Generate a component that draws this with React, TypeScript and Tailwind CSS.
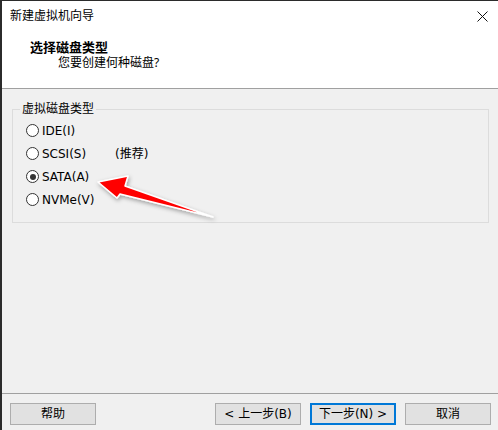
import React from "react";

const FONT = { fontFamily: '"Noto Sans", "Noto Sans CJK SC", sans-serif' };
const WIDE = { fontFamily: '"DejaVu Sans", "Noto Sans CJK SC", sans-serif' };

type Opt = { label: string; note?: string; checked?: boolean };

const OPTIONS: Opt[] = [
  { label: "IDE(I)" },
  { label: "SCSI(S)", note: "(推荐)" },
  { label: "SATA(A)", checked: true },
  { label: "NVMe(V)" },
];

function Radio({ opt }: { opt: Opt }) {
  return (
    <div className="flex h-[23px] items-center">
      <div className="flex w-[89px] items-center gap-[3px]">
        <span className="flex h-[13px] w-[13px] items-center justify-center rounded-full border border-[#333] bg-white">
          {opt.checked && <span className="h-[6px] w-[6px] rounded-full bg-[#333]" />}
        </span>
        <span className="text-[12px] leading-[16px] text-black" style={WIDE}>
          {opt.label}
        </span>
      </div>
      {opt.note && (
        <span className="text-[12px] leading-[16px] text-black" style={WIDE}>
          {opt.note}
        </span>
      )}
    </div>
  );
}

function Btn({ children, primary }: { children: React.ReactNode; primary?: boolean }) {
  return (
    <button
      className={
        "flex h-[22px] w-[86px] items-center justify-center bg-[#e1e1e1] text-[12px] leading-[16px] text-black " +
        (primary ? "border-2 border-[#0078d7]" : "border border-[#adadad]")
      }
      style={WIDE}
    >
      {children}
    </button>
  );
}

export default function App() {
  return (
    <div
      className="relative flex h-[430px] w-[498px] flex-col overflow-hidden border-t border-l-2 border-[#2b2b2b] bg-[#f0f0f0]"
      style={FONT}
    >
      {/* header */}
      <div className="h-[88px] shrink-0 border-b border-[#a0a0a0] bg-white">
        <div className="flex h-[30px] items-center justify-between pl-[8px] pr-[10px]">
          <span className="text-[12px] leading-[16px] text-black">新建虚拟机向导</span>
          <svg width="11" height="11" viewBox="0 0 11 11">
            <path d="M0.5 0.5 L10.5 10.5 M10.5 0.5 L0.5 10.5" stroke="#111" strokeWidth="1" />
          </svg>
        </div>
        <div className="mt-[9px] h-[15px] pl-[28px] text-[13px] font-bold leading-[15px] text-black">选择磁盘类型</div>
        <div className="pl-[56px] text-[12px] leading-[16px] text-black">您要创建何种磁盘?</div>
      </div>

      {/* body */}
      <div className="h-[304px] shrink-0">
        <fieldset className="mt-[12px] ml-[10px] mr-[9px] h-[122px] border border-[#dcdcdc] p-0 pl-[13px]">
          <legend className="ml-[-6px] px-[2px] text-[12px] leading-[16px] text-black">虚拟磁盘类型</legend>
          <div className="pt-[2px]">
            {OPTIONS.map((o) => (
              <Radio key={o.label} opt={o} />
            ))}
          </div>
        </fieldset>
      </div>

      {/* footer */}
      <div className="flex h-[37px] shrink-0 items-start border-t border-[#a0a0a0] pt-[9px] pl-[8px]">
        <Btn>帮助</Btn>
        <div className="ml-[119px] flex gap-[9px]">
          <Btn>&lt; 上一步(B)</Btn>
          <Btn primary>下一步(N) &gt;</Btn>
          <Btn>取消</Btn>
        </div>
      </div>

      {/* annotation arrow */}
      <svg
        className="pointer-events-none absolute left-[-2px] top-[-1px]"
        width="498"
        height="430"
        viewBox="0 0 498 430"
      >
        <defs>
          <filter id="sh" x="-20%" y="-20%" width="140%" height="140%">
            <feDropShadow dx="1" dy="2" stdDeviation="2" floodColor="#000" floodOpacity="0.35" />
          </filter>
        </defs>
        <polygon
          points="98,182 128,176 125,186 213,217 120,194 117,198"
          fill="#ff0000"
          stroke="#ffffff"
          strokeWidth="1.5"
          strokeLinejoin="round"
          filter="url(#sh)"
        />
      </svg>
    </div>
  );
}
